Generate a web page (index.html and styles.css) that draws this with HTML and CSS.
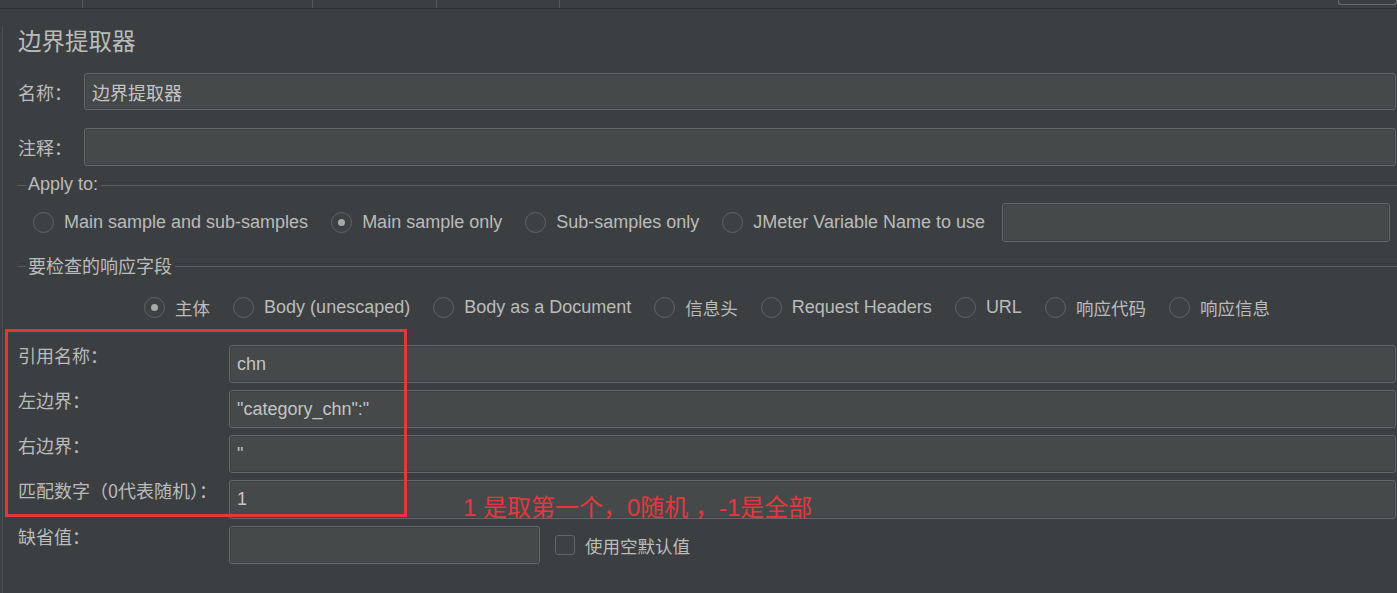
FILE: index.html
```html
<!DOCTYPE html>
<html lang="zh-CN">
<head>
    <meta charset="UTF-8">
    <title>边界提取器</title>
    <link rel="stylesheet" href="styles.css">
</head>
<body>
    <div class="tabbar">
        <span class="tab tab-1"></span>
        <span class="tab tab-2"></span>
        <span class="tab tab-3"></span>
        <span class="tab tab-4"></span>
        <span class="tab-btn"></span>
    </div>

    <div class="panel">
        <h1 class="title">边界提取器</h1>

        <div class="row row-name">
            <label class="lbl lbl-short">名称：</label>
            <div class="field field-name cjk">边界提取器</div>
        </div>

        <div class="row row-comment">
            <label class="lbl lbl-short">注释：</label>
            <div class="field field-comment"></div>
        </div>

        <div class="group-head head-apply"><span>Apply to:</span></div>
        <div class="radios radios-apply">
            <div class="radio"><span class="dot"></span>Main sample and sub-samples</div>
            <div class="radio"><span class="dot on"></span>Main sample only</div>
            <div class="radio"><span class="dot"></span>Sub-samples only</div>
            <div class="radio last"><span class="dot"></span>JMeter Variable Name to use</div>
            <div class="field field-var"></div>
        </div>

        <div class="group-head head-field"><span class="cjk">要检查的响应字段</span></div>
        <div class="radios radios-field">
            <div class="radio"><span class="dot on"></span><span class="cjk">主体</span></div>
            <div class="radio"><span class="dot"></span>Body (unescaped)</div>
            <div class="radio"><span class="dot"></span>Body as a Document</div>
            <div class="radio"><span class="dot"></span><span class="cjk">信息头</span></div>
            <div class="radio"><span class="dot"></span>Request Headers</div>
            <div class="radio"><span class="dot"></span>URL</div>
            <div class="radio"><span class="dot"></span><span class="cjk">响应代码</span></div>
            <div class="radio last"><span class="dot"></span><span class="cjk">响应信息</span></div>
        </div>

        <div class="params">
            <div class="prow">
                <label class="plabel">引用名称：</label>
                <div class="field">chn</div>
            </div>
            <div class="prow">
                <label class="plabel">左边界：</label>
                <div class="field">"category_chn":"</div>
            </div>
            <div class="prow">
                <label class="plabel">右边界：</label>
                <div class="field">"</div>
            </div>
            <div class="prow">
                <label class="plabel">匹配数字（0代表随机）：</label>
                <div class="field field-tall">1</div>
            </div>
            <div class="prow">
                <label class="plabel">缺省值：</label>
                <div class="default-wrap">
                    <div class="field field-default"></div>
                    <span class="checkbox"></span>
                    <span class="check-text">使用空默认值</span>
                </div>
            </div>

            <!-- annotation drawn over the form -->
            <div class="mark-box"></div>
            <div class="mark-text">1 是取第一个，0随机 ，-1是全部</div>
        </div>
    </div>
</body>
</html>
```

FILE: styles.css
```css
* {
    box-sizing: border-box;
}
body {
    margin: 0;
    height: 593px;
    overflow: hidden;
    background: #3c3f41;
    color: #bbbbbb;
    font-family: "Liberation Sans", "Noto Sans CJK SC", sans-serif;
    font-size: 18px;
}
.cjk {
    font-family: "Noto Sans CJK SC", sans-serif;
}

/* top tab strip */
.tabbar {
    display: flex;
    height: 9px;
    border-bottom: 1px solid #2c2e30;
}
.tab {
    height: 8px;
    border-right: 1px solid #56595b;
}
.tab-1 { width: 83px; }
.tab-2 { width: 230px; }
.tab-3 { width: 124px; }
.tab-4 { width: 123px; }
.tab-btn {
    margin-left: auto;
    width: 59px;
    height: 5px;
    border: 1px solid #6a6d6f;
    border-top: none;
    border-radius: 0 0 3px 3px;
}

.panel {
    margin-left: 2px;
    height: 584px;
    border-left: 1px solid #4d5052;
    padding: 0 1px 0 15px;
}
.title {
    margin: 17px 0 0;
    font-family: "Noto Sans CJK SC", sans-serif;
    font-size: 23.5px;
    font-weight: normal;
    line-height: 28px;
}

.row {
    display: flex;
    align-items: center;
}
.row-name { margin-top: 19px; }
.row-comment { margin-top: 18px; }
.lbl {
    font-family: "Noto Sans CJK SC", sans-serif;
    font-size: 18px;
}
.lbl-short { width: 66px; }

.field {
    flex: 1;
    height: 38px;
    display: flex;
    align-items: center;
    padding-left: 7px;
    background: #45494a;
    border: 1px solid #65686a;
    border-radius: 3px;
    box-shadow: inset 0 0 0 1px #3f4244;
    color: #c4c4c4;
    font-size: 18px;
}
.field-name {
    height: 37px;
    font-size: 18px;
}
.field-tall { height: 39px; }

/* group headers with a line */
.group-head {
    display: flex;
    align-items: center;
    height: 20px;
}
.group-head::before,
.group-head::after {
    content: "";
    height: 2px;
    border-top: 1px solid #35383a;
    border-bottom: 1px solid #5a5d5f;
}
.group-head::before {
    width: 8px;
    margin-right: 2px;
}
.group-head::after {
    flex: 1;
    margin-left: 3px;
    margin-right: -1px;
}
.head-apply { margin-top: 8px; }
.head-field { margin-top: 13px; }

.radios {
    display: flex;
    align-items: center;
    font-size: 18px;
}
.radios .cjk { font-size: 17.5px; }
.radios-apply {
    margin-top: 9px;
    height: 39px;
    padding: 0 6px 0 15px;
}
.radios-field {
    margin-top: 20px;
    height: 24px;
    justify-content: center;
}
.radio {
    display: flex;
    align-items: center;
    gap: 10px;
    margin-right: 23px;
    white-space: nowrap;
}
.radio.last { margin-right: 17px; }
.radios-field .radio.last { margin-right: 0; }
.dot {
    width: 21px;
    height: 21px;
    border-radius: 50%;
    border: 1px solid #626567;
    background: #3e4143;
    display: flex;
    align-items: center;
    justify-content: center;
}
.dot.on::after {
    content: "";
    width: 7px;
    height: 7px;
    border-radius: 50%;
    background: #a8a8a8;
}
.field-var { height: 39px; }

/* extractor parameters */
.params {
    position: relative;
    margin-top: 26px;
    display: flex;
    flex-direction: column;
    gap: 7px;
}
.prow {
    display: flex;
    align-items: flex-start;
}
.plabel {
    width: 211px;
    line-height: 20px;
    font-family: "Noto Sans CJK SC", sans-serif;
    font-size: 18px;
    white-space: nowrap;
}
.default-wrap {
    display: flex;
    align-items: center;
}
.field-default {
    flex: none;
    width: 311px;
}
.checkbox {
    width: 20px;
    height: 20px;
    margin-left: 15px;
    border: 1px solid #626567;
    border-radius: 3px;
    background: #3e4143;
}
.check-text {
    margin-left: 10px;
    font-family: "Noto Sans CJK SC", sans-serif;
    font-size: 17.5px;
}

.mark-box {
    position: absolute;
    left: -13px;
    top: -16px;
    width: 402px;
    height: 188px;
    border: 3px solid #e2373c;
}
.mark-text {
    position: absolute;
    left: 445px;
    top: 149px;
    line-height: 28px;
    font-family: "Liberation Sans", "Noto Sans CJK SC", sans-serif;
    font-size: 24px;
    color: #e4383d;
    white-space: nowrap;
}
```
